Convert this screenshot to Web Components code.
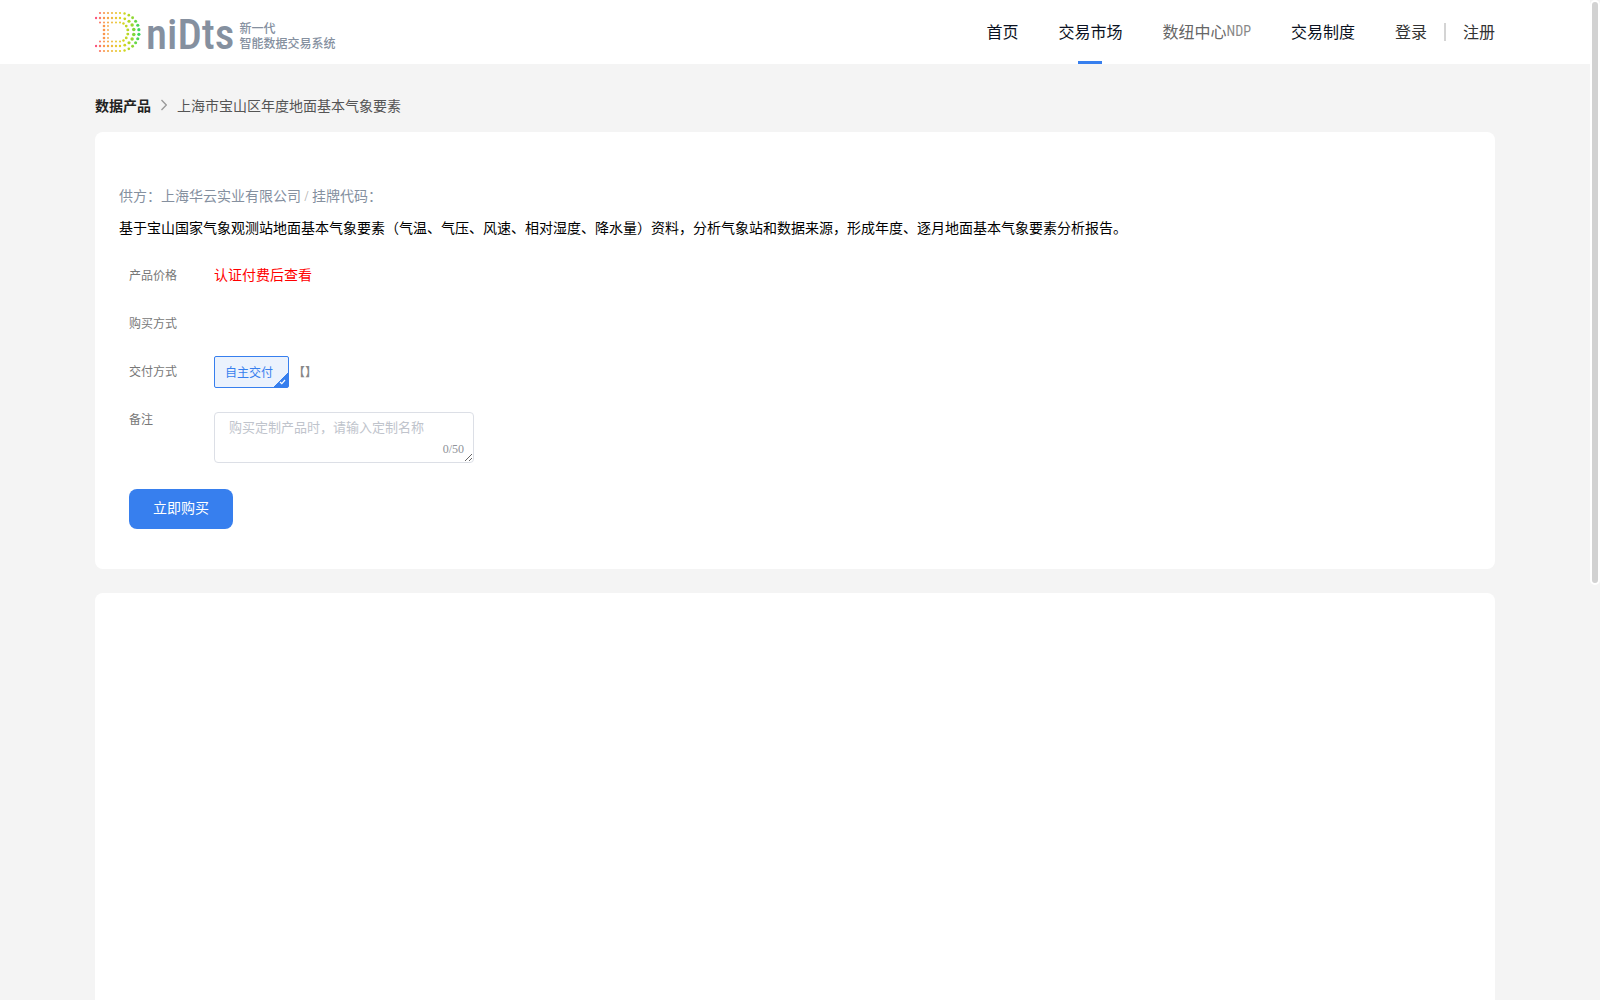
<!DOCTYPE html>
<html lang="zh-CN">
<head>
<meta charset="utf-8">
<title>数据产品</title>
<style>
html,body{margin:0;height:100%}
body{font-family:"Liberation Serif","Noto Sans CJK SC",serif;font-size:14px;line-height:20px;color:#000}
</style>
</head>
<body>
<app-shell>
  <site-header></site-header>
  <main-column>
    <crumb-trail></crumb-trail>
    <content-card><product-order></product-order></content-card>
    <content-card tall></content-card>
  </main-column>
</app-shell>
<script>
const define = (name, html, setup) => {
  const t = document.createElement('template');
  t.innerHTML = '<style>:host{display:block}*{box-sizing:border-box}</style>' + html;
  customElements.define(name, class extends HTMLElement {
    constructor() {
      super();
      this.attachShadow({mode: 'open'}).append(t.content.cloneNode(true));
      if (setup) setup(this.shadowRoot);
    }
  });
};

define('app-shell', `<style>
:host{display:flex;height:100vh;background:#f4f4f4;overflow:hidden}
.page{flex:1;min-width:0;overflow-x:hidden;overflow-y:auto;scrollbar-width:none}
.rail{width:10px;flex:none}
.thumb{height:58.5%;background:#d2d2d2;border:2px solid #fff;border-radius:5px}
</style><div class="page"><slot></slot></div><div class="rail"><div class="thumb"></div></div>`);

define('brand-logo', `<style>
:host{display:flex;color:#85909f}
a{display:flex;align-items:center;gap:5px;color:inherit;text-decoration:none}
svg{display:block}
.word{font:500 43px/48px "Roboto Condensed","Liberation Sans",sans-serif;padding-top:4px}
.tag{font:500 12px/15px "Noto Sans CJK SC",sans-serif;padding-top:6px}
.tag span{display:block}
</style><a href="#"><svg width="46" height="42" viewBox="95 11 46 42" aria-hidden="true"></svg><span class="word">niDts</span><span class="tag"><span>新一代</span><span>智能数据交易系统</span></span></a>`, root => {
  const svg = root.querySelector('svg');
  const stops = [[95,[250,75,130]],[104,[250,150,75]],[113,[238,190,60]],[122,[222,214,30]],[131,[165,215,40]],[140,[45,215,100]]];
  const tint = x => {
    for (let i = 1; i < stops.length; i++) if (x <= stops[i][0]) {
      const [a, p] = stops[i-1], [b, q] = stops[i], k = Math.max(0, (x-a)/(b-a));
      return 'rgb(' + p.map((v, j) => Math.round(v + (q[j]-v)*k)) + ')';
    }
    return 'rgb(45,215,100)';
  };
  const dot = (x, y, r) => {
    const c = document.createElementNS('http://www.w3.org/2000/svg', 'circle');
    c.setAttribute('cx', x); c.setAttribute('cy', y); c.setAttribute('r', r); c.setAttribute('fill', tint(x));
    svg.append(c);
  };
  const rows = [[19, 100, 19, 13, 1.1, 1.6], [14, 96, 14, 9, 1.2, 1.8], [9.5, 100, 8, 7, 1, 1.5]];
  for (const [ry, x0, rx, n, r1, r2] of rows) {
    for (let x = x0; x < 119; x += 4) for (const s of [-1, 1]) dot(x, 32 + s*ry, r1);
    for (let i = 0; i <= n; i++) {
      const a = -Math.PI/2 + Math.PI*i/n;
      dot(120 + rx*Math.cos(a), 32 + ry*Math.sin(a), r1 + (r2-r1)*Math.cos(a));
    }
  }
  for (let y = 26; y <= 38; y += 4) { dot(104, y, 1.3); dot(108, y, .9); }
});

define('nav-item', `<style>
:host{display:flex;color:#0b1222}
a{display:flex;align-items:center;color:inherit;text-decoration:none;height:64px;padding-bottom:3px}
:host([muted]){color:#666}
:host([soft]){color:#333}
:host([active]){background:linear-gradient(#377fee,#377fee) center bottom/24px 3px no-repeat}
</style><a href="#"><slot></slot></a>`);

define('site-header', `<style>
:host{background:#fff;height:64px}
.in{max-width:1400px;margin:0 auto;height:64px;display:flex;align-items:center;justify-content:space-between}
nav{display:flex;gap:40px;font:16px/24px "Noto Sans CJK SC",sans-serif}
.user{display:flex;align-items:center;gap:17px}
.sep{width:2px;height:18px;background:#d4d4d4}
.lat{font-family:"Roboto Condensed","Liberation Serif",serif;font-size:14px;color:#888}
</style><div class="in"><brand-logo></brand-logo><nav>
<nav-item>首页</nav-item><nav-item active>交易市场</nav-item><nav-item muted>数纽中心<span class="lat">NDP</span></nav-item><nav-item>交易制度</nav-item>
<div class="user"><nav-item soft>登录</nav-item><span class="sep"></span><nav-item soft>注册</nav-item></div></nav></div>`);

define('main-column', `<style>:host{max-width:1400px;margin:0 auto;display:flex;flex-direction:column;gap:24px}</style><slot></slot>`);

define('crumb-trail', `<style>
:host{padding:31px 0 1px;margin-bottom:-8px}
nav{display:flex;align-items:center;gap:10px;color:#555;font-family:"Noto Sans CJK SC",sans-serif}
a{color:#222;font-weight:700;text-decoration:none}
svg{display:block}
</style><nav><a href="#">数据产品</a><svg width="6" height="12" viewBox="0 0 6 12" fill="none" stroke="#999" stroke-width="1.3"><path d="M.5 1 5.3 6 .5 11"/></svg><span>上海市宝山区年度地面基本气象要素</span></nav>`);

define('content-card', `<style>
:host{background:#fff;border-radius:8px;padding:53px 24px 40px}
:host([tall]){min-height:1000px}
</style><slot></slot>`);

define('form-row', `<style>
:host{display:flex;align-items:flex-start;min-height:32px;font:12px/30px "Noto Sans CJK SC",sans-serif;color:#777}
.l{flex:none;width:85px}
.c{display:flex;align-items:center;gap:4px;min-height:32px}
</style><div class="l"><slot name="label"></slot></div><div class="c"><slot></slot></div>`);

define('pick-chip', `<style>
button{display:block;height:32px;width:75px;padding:0 0 1px 10px;text-align:left;border:1px solid #377fee;border-radius:2px;color:#377fee;font:12px/28px "Noto Sans CJK SC",sans-serif;
background:linear-gradient(135deg,transparent 50%,#377fee 50%) right bottom/15px 15px no-repeat,#ebf2fd;position:relative}
svg{position:absolute;right:2px;bottom:2px}
</style><button type="button" aria-pressed="true"><slot></slot><svg width="7" height="6" viewBox="0 0 7 6" fill="none" stroke="#fff" stroke-width="1.2"><path d="M1 3 2.8 4.7 6 1"/></svg></button>`);

define('product-order', `<style>
:host{font-family:"Noto Sans CJK SC",sans-serif}
.sup{color:#85909f}
.sup i{font-style:normal;color:#aaa;font-family:"Liberation Serif",serif}
p{margin:0}
.desc{margin-top:10px}
form{display:flex;flex-direction:column;gap:16px;padding:23px 10px 0}
.price{color:#f00;font-size:14px;line-height:28px;padding-bottom:4px}
.brackets{font-weight:700;color:#888}
.note{display:block;margin-top:8px;position:relative}
textarea{display:block;width:260px;height:51px;padding:4px 14px;border:1px solid #dcdfe6;border-radius:4px;resize:both;font:13px/20px "Noto Sans CJK SC",sans-serif;outline:0;overflow:hidden}
textarea::placeholder{color:#c0c4cc;opacity:1}
.count{position:absolute;right:10px;bottom:7px;font:12px/14px "Liberation Serif",serif;color:#909399}
.buy{align-self:flex-start;height:40px;width:104px;margin-top:10px;padding:0 0 4px;border:0;border-radius:8px;background:#377fee;color:#fff;font:14px/20px "Noto Sans CJK SC",sans-serif}
</style>
<p class="sup">供方：上海华云实业有限公司<i> / </i>挂牌代码：</p>
<p class="desc">基于宝山国家气象观测站地面基本气象要素（气温、气压、风速、相对湿度、降水量）资料，分析气象站和数据来源，形成年度、逐月地面基本气象要素分析报告。</p>
<form>
<form-row><span slot="label">产品价格</span><span class="price">认证付费后查看</span></form-row>
<form-row><span slot="label">购买方式</span></form-row>
<form-row><span slot="label">交付方式</span><pick-chip>自主交付</pick-chip><span class="brackets">【】</span></form-row>
<form-row><label slot="label" for="note">备注</label><span class="note"><textarea id="note" maxlength="50" placeholder="购买定制产品时，请输入定制名称"></textarea><span class="count">0/50</span></span></form-row>
<button class="buy" type="button">立即购买</button>
</form>`);
</script>
</body>
</html>
